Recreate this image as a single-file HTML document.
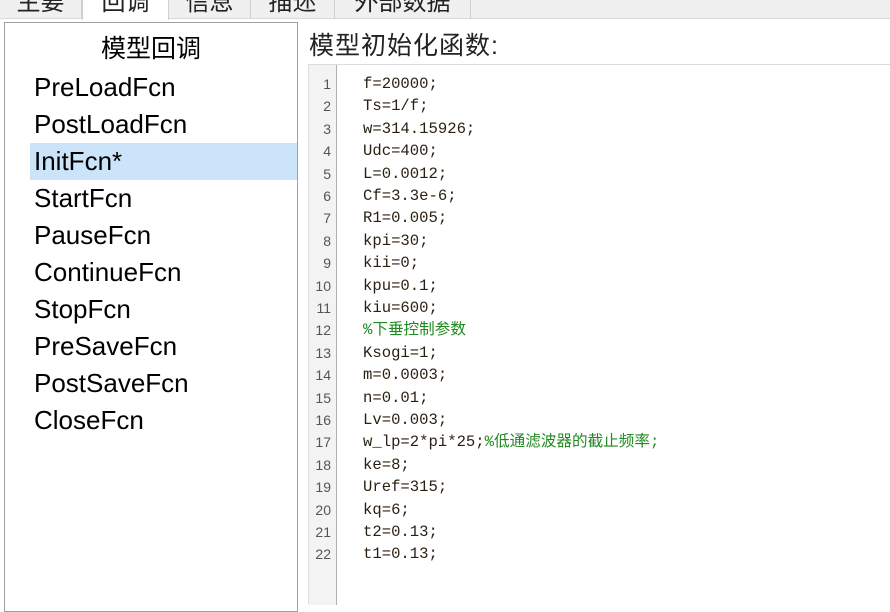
<!DOCTYPE html>
<html><head><meta charset="utf-8"><style>
*{margin:0;padding:0;box-sizing:border-box}
body{width:890px;height:602px;background:#fff;overflow:hidden;position:relative;font-family:"Liberation Sans","Noto Sans CJK SC",sans-serif}
.tabbar{position:absolute;left:0;top:0;width:890px;height:19px;background:#f0f0f0;border-bottom:1px solid #d9d9d9}
.tab{position:absolute;top:-10px;height:29px;font-size:24px;line-height:26px;text-align:center;color:#222;border-right:1px solid #d0d0d0;overflow:hidden}
.tab.sel{background:#fff;height:30px;border-left:1px solid #d0d0d0}
.left{position:absolute;left:4px;top:22px;width:294px;height:590px;border:1px solid #a0a0a0}
.title{position:absolute;left:0;width:292px;top:30px;text-align:center;font-size:25px;color:#000}
.item{position:absolute;left:25px;right:0;height:37px;font-size:26px;line-height:37px;color:#000;padding-left:4px}
.item.sel{background:#cce4fa}
.h2{position:absolute;left:309px;top:26px;font-size:25px;color:#222;letter-spacing:1px}
.ed{position:absolute;left:308px;top:64px;width:582px;height:540px;border-top:1px solid #dcdcdc;border-left:1px solid #dcdcdc}
.gut{position:absolute;left:0;top:0;width:28px;height:540px;background:#f3f3f3;border-right:1px solid #b0b0b0}
.ln{position:absolute;right:6px;font-family:"Liberation Sans",sans-serif;font-size:14px;line-height:20px;color:#555;text-align:right}
.cl{position:absolute;left:54px;font-family:"Liberation Mono","Noto Sans CJK SC",monospace;font-size:15.6px;line-height:20px;height:20px;color:#2a1f10;white-space:pre}
.g{color:#1f8a1f}
</style></head><body>
<div class="tabbar"></div>
<div class="tab" style="left:0;width:82px">主要</div>
<div class="tab sel" style="left:82px;width:87px">回调</div>
<div class="tab" style="left:169px;width:82px">信息</div>
<div class="tab" style="left:251px;width:84px">描述</div>
<div class="tab" style="left:335px;width:136px">外部数据</div>
<div class="left">
<div class="title" style="top:6px">模型回调</div>
<div class="item" style="top:46px">PreLoadFcn</div>
<div class="item" style="top:83px">PostLoadFcn</div>
<div class="item sel" style="top:120px">InitFcn*</div>
<div class="item" style="top:157px">StartFcn</div>
<div class="item" style="top:194px">PauseFcn</div>
<div class="item" style="top:231px">ContinueFcn</div>
<div class="item" style="top:268px">StopFcn</div>
<div class="item" style="top:305px">PreSaveFcn</div>
<div class="item" style="top:342px">PostSaveFcn</div>
<div class="item" style="top:379px">CloseFcn</div>
</div>
<div class="h2">模型初始化函数:</div>
<div class="ed"><div class="gut"></div>
<div id="c"></div>
</div>
<script>
var L=["f=20000;","Ts=1/f;","w=314.15926;","Udc=400;","L=0.0012;","Cf=3.3e-6;","R1=0.005;","kpi=30;","kii=0;","kpu=0.1;","kiu=600;","<span class=g>%下垂控制参数</span>","Ksogi=1;","m=0.0003;","n=0.01;","Lv=0.003;","w_lp=2*pi*25;<span class=g>%低通滤波器的截止频率;</span>","ke=8;","Uref=315;","kq=6;","t2=0.13;","t1=0.13;"];
var h="";for(var i=0;i<L.length;i++){var t=9+i*22.4;h+='<div class="ln" style="top:'+t+'px;left:0;width:22px">'+(i+1)+'</div><div class="cl" style="top:'+t+'px">'+L[i]+'</div>';}
document.getElementById("c").innerHTML=h;
</script>
</body></html>
